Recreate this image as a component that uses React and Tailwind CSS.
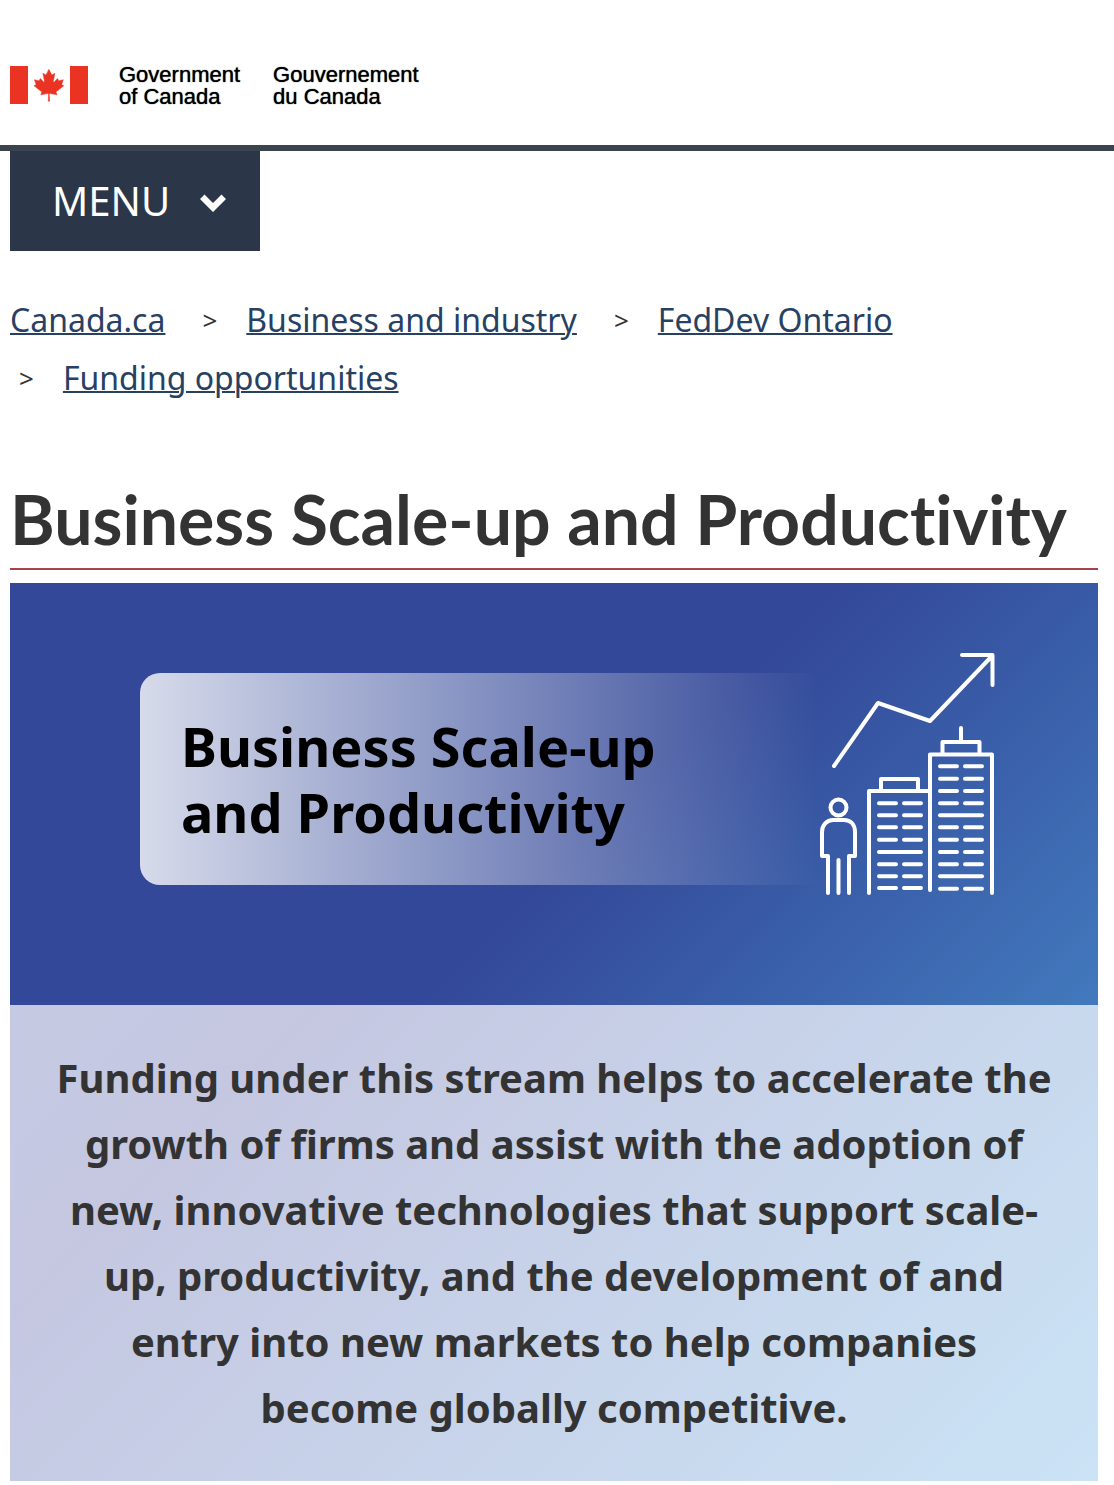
const crumbs = ["Canada.ca", "Business and industry", "FedDev Ontario", "Funding opportunities"];

function Flag() {
  return (
    <svg viewBox="0 0 78 38" className="h-[38px] w-[78px]" fill="#ea3323" role="img" aria-label="Flag of Canada">
      <path d="M0 0h18v38H0zM60 0h18v38H60z" />
      <g transform="translate(19.700 .2) scale(.008 .0079)">
        <path d="m2490 4430-45-863a95 95 0 0 1 111-98l859 151-116-320a65 65 0 0 1 20-73l941-762-212-99a65 65 0 0 1-34-79l186-572-542 115a65 65 0 0 1-73-38l-105-247-423 454a65 65 0 0 1-111-57l204-1052-327 189a65 65 0 0 1-91-27l-332-652-332 652a65 65 0 0 1-91 27l-327-189 204 1052a65 65 0 0 1-111 57l-423-454-105 247a65 65 0 0 1-73 38l-542-115 186 572a65 65 0 0 1-34 79l-212 99 941 762a65 65 0 0 1 20 73l-116 320 859-151a95 95 0 0 1 111 98l-45 863z" stroke="#ea3323" strokeWidth="60" />
      </g>
    </svg>
  );
}

const leftRows = [803.3, 815.3, 827.3, 839.7, 852, 864.3, 876.3, 888];
const rightRows = [766.3, 778.7, 791, 803.3, 815.3, 827.3, 839.7, 852, 864.3, 876.3, 888.7];

function GrowthIcon() {
  return (
    <svg viewBox="818 650 180 248" className="h-[248px] w-[180px] shrink-0" fill="none" stroke="#fff" strokeWidth="4" strokeLinecap="round" strokeLinejoin="round" aria-hidden="true">
      <path d="M834 766 878 703 930 721 992 656M962 655h30.500v30" />
      <circle cx="838.500" cy="807.500" r="8" />
      <path d="M828 893v-37h-6v-24c0-7 5-12 11-12h11c7 0 11 5 11 12v24h-6v37M838.500 860v33" />
      <path d="M869 893V791h61M881 790v-11h37v11M930 890V754.500h62V893M942.500 753v-11h37v11M961 741v-13" />
      {leftRows.map((y, i) => (
        <path key={y} d={i === 4 ? "M879 0h42" : "M879 0h17M904 0h17"} transform={`translate(0 ${y})`} />
      ))}
      {rightRows.map((y, i) => (
        <path key={y} d={i === 4 || i === 9 ? "M940 0h42" : "M940 0h17M965 0h17"} transform={`translate(0 ${y})`} />
      ))}
    </svg>
  );
}

export default function App() {
  return (
    <div className="bg-white font-['Noto_Sans',sans-serif] text-[#333]">
      <header>
        <div className="flex items-start border-b-6 border-[#3b434f] px-[10px] pt-[66px] pb-[37px]">
          <a href="#" className="flex font-['Liberation_Sans',Arial,sans-serif] text-[22px] leading-[22px] text-black [text-shadow:0_0_1px_#000]">
            <Flag />
            <span className="-mt-[2px] ml-[31px]">Government<br />of Canada</span>
            <span lang="fr" className="-mt-[2px] ml-[33px]">Gouvernement<br />du Canada</span>
          </a>
        </div>
        <button type="button" className="ml-[10px] flex h-[100px] w-[250px] items-center bg-[#2b3749] pl-[42px] text-[40px] text-white">
          MENU
          <svg viewBox="0 0 26 18" className="mt-1 ml-[30px] h-[18px] w-[26px]" fill="#fff" aria-hidden="true">
            <path d="M0 5 4.500 .5 13 9 21.500 .5 26 5 13 18z" />
          </svg>
        </button>
      </header>
      <nav aria-label="Breadcrumb" className="mt-10 px-[10px]">
        <ol className="flex flex-wrap text-[32px] leading-[58px]">
          {crumbs.map((label, i) => (
            <li key={label} className="mr-[28px] flex items-center">
              {i > 0 && <span className="mr-[29px] ml-[9px] text-[26px]" aria-hidden="true">&gt;</span>}
              <a href="#" className="text-[#284162] underline decoration-2">{label}</a>
            </li>
          ))}
        </ol>
      </nav>
      <main className="mr-4 ml-[10px]">
        <h1 className="mt-[71px] border-b-2 border-[#a64348] pb-[8px] font-['Lato',sans-serif] text-[68px] leading-[82px] font-bold [font-variant-ligatures:none]">Business Scale-up and Productivity</h1>
        <section className="mt-[13px] pb-1">
          <div className="flex bg-linear-135 from-[#334898] from-55% to-[#4279bd] pt-[67px] pr-[100px] pb-[107px] pl-[130px]">
            <div className="mt-[23px] mb-[13px] flex min-w-0 flex-1 items-center rounded-l-[20px] bg-linear-to-r from-white/80 to-white/0 px-[41px]">
              <h2 className="text-[54px] leading-[66px] font-bold text-black">Business Scale-up<br />and Productivity</h2>
            </div>
            <GrowthIcon />
          </div>
          <p className="bg-linear-135 from-[#c5cae3] via-[#c5c7e1] via-20% to-[#cae3f5] px-[40px] py-10 text-center text-[40px] leading-[66px] font-bold">
            Funding under this stream helps to accelerate the growth of firms and assist with the adoption of new, innovative technologies that support scale-up, productivity, and the development of and entry into new markets to help companies become globally competitive.
          </p>
        </section>
      </main>
    </div>
  );
}
